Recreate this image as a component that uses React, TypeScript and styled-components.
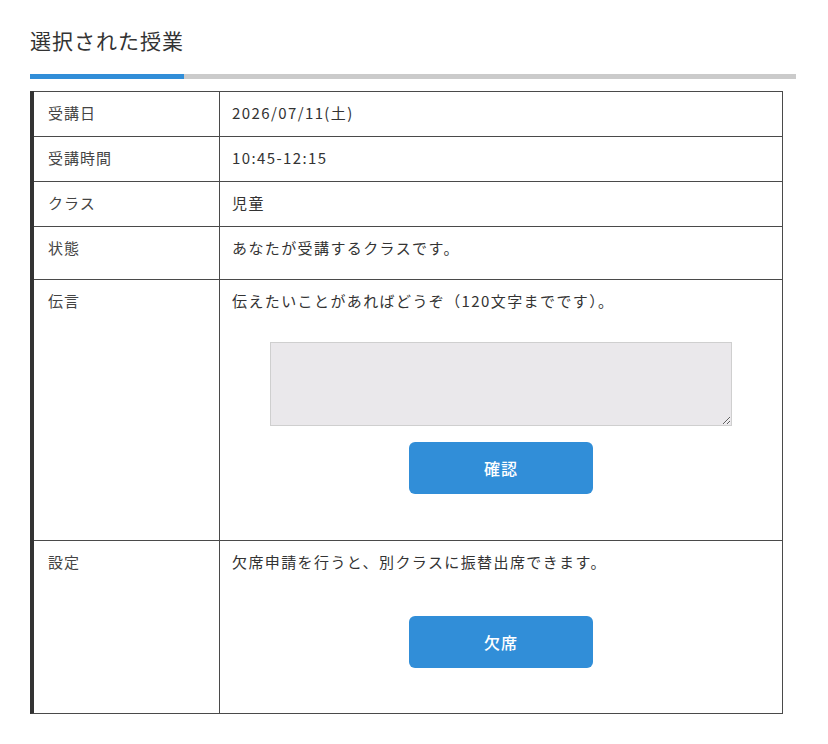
import React from 'react'
import styled, { createGlobalStyle } from 'styled-components'

const GlobalStyle = createGlobalStyle`
  body {
    background: #fff;
    color: #333;
    font-family: 'Noto Sans CJK JP', 'Noto Sans', sans-serif;
    margin: 0;
  }
`

const Page = styled.div`
  padding: 25px 32px 30px 30px;
  width: 766px;
`

const Title = styled.h2`
  color: #333;
  font-size: 21px;
  font-weight: 400;
  letter-spacing: 1px;
  line-height: 31px;
  margin: 0;
`

const Bar = styled.div`
  background: #cbcbcb;
  height: 5px;
  margin-top: 18px;
  position: relative;

  &::before {
    background: #318ed8;
    content: '';
    height: 100%;
    left: 0;
    position: absolute;
    top: 0;
    width: 154px;
  }
`

const Table = styled.div`
  border-bottom: 1px solid #4a4a4a;
  border-left: 4px solid #333;
  border-right: 1px solid #4a4a4a;
  margin-top: 12px;
  width: 748px;
`

const Row = styled.div<{ $bottom?: number }>`
  border-top: 1px solid #4a4a4a;
  display: grid;
  grid-template-columns: 186px 1fr;

  & > * {
    padding-bottom: ${(props) => props.$bottom ?? 12}px;
  }
`

const Label = styled.div`
  border-right: 1px solid #4a4a4a;
  color: #444;
  font-size: 15px;
  letter-spacing: 1px;
  line-height: 22px;
  padding-left: 14px;
  padding-top: 10px;
`

const Value = styled.div`
  color: #333;
  font-size: 15px;
  letter-spacing: 1.4px;
  line-height: 22px;
  padding-left: 12px;
  padding-right: 12px;
  padding-top: 10px;
`

const Centered = styled.div<{ $top: number }>`
  display: flex;
  flex-direction: column;
  align-items: center;
  margin-left: -12px;
  margin-right: -12px;
  margin-top: ${(props) => props.$top}px;
`

const Message = styled.textarea`
  background: #eae8eb;
  border: 1px solid #cfcfcf;
  box-sizing: border-box;
  display: block;
  font-family: inherit;
  height: 84px;
  outline: none;
  width: 462px;
`

const ActionButton = styled.button<{ $top?: number }>`
  background: #318ed8;
  border: none;
  border-radius: 6px;
  color: #fff;
  cursor: pointer;
  font-family: inherit;
  font-size: 16px;
  font-weight: 500;
  height: 52px;
  letter-spacing: 1px;
  margin-top: ${(props) => props.$top ?? 0}px;
  width: 184px;
`

const rows = [
  { label: '受講日', value: '2026/07/11(土)' },
  { label: '受講時間', value: '10:45-12:15' },
  { label: 'クラス', value: '児童' },
]

export default function App() {
  return (
    <Page>
      <GlobalStyle />
      <Title>選択された授業</Title>
      <Bar />
      <Table>
        {rows.map((row) => (
          <Row key={row.label}>
            <Label>{row.label}</Label>
            <Value>{row.value}</Value>
          </Row>
        ))}
        <Row $bottom={20}>
          <Label>状態</Label>
          <Value>あなたが受講するクラスです。</Value>
        </Row>
        <Row $bottom={46}>
          <Label>伝言</Label>
          <Value>
            伝えたいことがあればどうぞ（120文字までです）。
            <Centered $top={30}>
              <Message />
              <ActionButton $top={16}>確認</ActionButton>
            </Centered>
          </Value>
        </Row>
        <Row $bottom={45}>
          <Label>設定</Label>
          <Value>
            欠席申請を行うと、別クラスに振替出席できます。
            <Centered $top={43}>
              <ActionButton>欠席</ActionButton>
            </Centered>
          </Value>
        </Row>
      </Table>
    </Page>
  )
}
